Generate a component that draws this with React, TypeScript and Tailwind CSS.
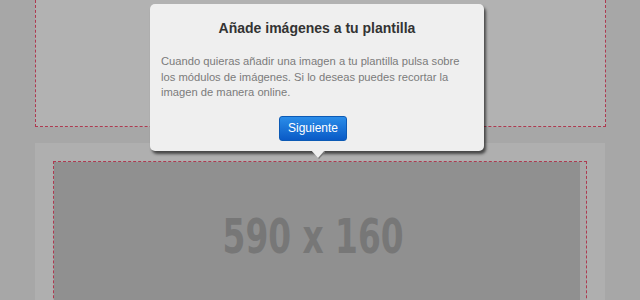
export default function App() {
    return (
        <div className="relative h-[300px] w-[640px] overflow-hidden bg-[#a7a7a7]">
            <div className="ml-[35px] h-[127px] w-[571px] border-x border-b border-dashed border-x-[#ad3a50] border-b-[#ad3a50] bg-[#b2b2b2]" />
            <div className="ml-[35px] mt-[16px] h-[200px] w-[570px] bg-[#afafaf] px-[18px] pt-[18px]">
                <div className="flex h-full border border-dashed border-[#ad3a50] bg-[#a9a9a9]">
                    <div className="h-full w-[526px] bg-[#909090] pt-[50px] pr-[8px] text-center">
                        <span
                            className="inline-block scale-x-[0.76] text-[48px] font-bold leading-[48px] text-[#777777]"
                            style={{ fontFamily: '"DejaVu Sans Condensed", "DejaVu Sans", sans-serif' }}
                        >
                            590 x 160
                        </span>
                    </div>
                </div>
            </div>

            <div
                className="absolute left-[150px] top-[4px] w-[334px] h-[147px] rounded-[5px] bg-[#efefef] shadow-[2px_3px_3px_rgba(0,0,0,0.6)] pt-[14px] px-[11px]"
                style={{ fontFamily: '"Liberation Sans", Arial, sans-serif' }}
            >
                <h2 className="text-center text-[14px] font-bold leading-[20px] text-[#333333]">
                    Añade imágenes a tu plantilla
                </h2>
                <p className="mt-[16px] text-[11.2px] leading-[15.5px] text-[#7b7b7b]">
                    <span className="block whitespace-nowrap">Cuando quieras añadir una imagen a tu plantilla pulsa sobre</span>
                    <span className="block whitespace-nowrap">los módulos de imágenes. Si lo deseas puedes recortar la</span>
                    <span className="block whitespace-nowrap">imagen de manera online.</span>
                </p>
                <div className="mt-[15px] flex justify-center pr-[8px]">
                    <button className="h-[25px] w-[68px] rounded-[3px] border border-[#0c5ab5] bg-gradient-to-b from-[#2b8de9] to-[#0a5ac6] text-[12px] text-white">
                        Siguiente
                    </button>
                </div>
                <svg className="absolute left-[161px] top-[146px]" width="14" height="9" viewBox="0 0 14 9">
                    <polygon points="0,0 14,0 7,8" fill="#777777" transform="translate(1,1)" />
                    <polygon points="0,0 14,0 7,8" fill="#efefef" />
                </svg>
            </div>
        </div>
    );
}
